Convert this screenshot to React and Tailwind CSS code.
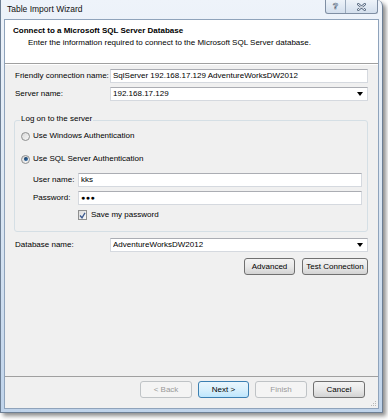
import React from "react";

const font = "font-['Liberation_Sans',Arial,sans-serif]";

function TextBox({ value, combo, children }) {
  return (
    <div className="flex-1 h-[14px] flex items-center bg-white border border-[#d5d9df] border-t-[#abadb3] pl-[2px] pr-[4px]">
      <span className="flex-1 leading-none whitespace-nowrap overflow-hidden">{children ?? value}</span>
      {combo && (
        <svg width="6" height="4" viewBox="0 0 6 4">
          <path d="M0 0h6L3 4z" fill="#000" />
        </svg>
      )}
    </div>
  );
}

function Radio({ checked, label }) {
  return (
    <div className="flex items-center h-[12px] gap-[3px]">
      <span className="w-[9px] h-[9px] rounded-full border border-[#8e8f8f] bg-linear-to-br from-[#d9d9d9] to-[#f7f7f7] flex items-center justify-center">
        {checked && <span className="w-[4px] h-[4px] rounded-full bg-linear-to-br from-[#0f2f52] to-[#3d7dbb]" />}
      </span>
      <span className="leading-none">{label}</span>
    </div>
  );
}

function Button({ children, w, kind = "normal" }) {
  const styles = {
    normal: "border-[#707070] bg-linear-to-b from-[#f4f4f4] via-[#e9e9e9] to-[#d3d3d3] text-black",
    primary: "border-[#3c7fb1] bg-linear-to-b from-[#eaf6fd] via-[#d9f0fc] to-[#bee6fd] text-black",
    disabled: "border-[#bfc3c6] bg-[#f4f4f4] text-[#9a9a9a]",
  };
  return (
    <div className={`${w} h-[17px] rounded-[3px] border flex items-center justify-center leading-none ${styles[kind]}`}>
      {children}
    </div>
  );
}

export default function App() {
  return (
    <div className={`w-[388px] h-[420px] bg-white ${font} text-[8px] text-black`}>
      <div className="w-[383px] h-[413px] flex flex-col border border-t-0 border-[#6d7f95] rounded-tr-[6px] bg-linear-to-b from-[#eef3fa] via-[#dae6f3] to-[#bfd3ea] shadow-[3px_3px_4px_rgba(0,0,0,0.45)]">
        {/* title bar */}
        <div className="h-[19px] flex justify-between items-start pl-[6px] pr-[4px]">
          <span className="text-[8.5px] text-[#111] mt-[5px] leading-none">Table Import Wizard</span>
          <div className="flex h-[14px] border border-t-0 border-[#7f8ea3] rounded-b-[3px] bg-linear-to-b from-[#eef3f9] to-[#d3dfed] overflow-hidden">
            <div className="w-[20px] flex items-center justify-center border-r border-[#9aa9bb]">
              <span className="text-[9px] font-bold text-[#f4f7fb] [-webkit-text-stroke:0.6px_#5e6f85] leading-none">?</span>
            </div>
            <div className="w-[31px] flex items-center justify-center">
              <svg width="9" height="8" viewBox="0 0 9 8">
                <path d="M1 1l7 6M8 1L1 7" stroke="#5e6f85" strokeWidth="2.4" strokeLinecap="round" />
                <path d="M1 1l7 6M8 1L1 7" stroke="#f4f7fb" strokeWidth="1" strokeLinecap="round" />
              </svg>
            </div>
          </div>
        </div>

        {/* client area */}
        <div className="relative flex-1 mx-[3px] mb-[3px] border border-[#8fa3bb] bg-[#f0f0f0] flex flex-col">
          <div className="h-[44px] bg-white border-b border-[#a0a0a0] pl-[8px] pt-[7px]">
            <div className="font-bold leading-none">Connect to a Microsoft SQL Server Database</div>
            <div className="leading-none mt-[4px] pl-[15px]">
              Enter the information required to connect to the Microsoft SQL Server database.
            </div>
          </div>

          <div className="flex-1 flex flex-col border-t border-white pl-[10px] pr-[10px] pt-[4px]">
            <div className="flex items-center">
              <span className="w-[95px] leading-none">Friendly connection name:</span>
              <TextBox value="SqlServer 192.168.17.129 AdventureWorksDW2012" />
            </div>
            <div className="flex items-center mt-[4px]">
              <span className="w-[95px] leading-none">Server name:</span>
              <TextBox value="192.168.17.129" combo />
            </div>

            {/* group box */}
            <div className="relative -ml-[1px] mt-[19px] h-[112px] border border-[#d5dfe5] rounded-[3px] pl-[6px] pr-[5px] pt-[9px]">
              <span className="absolute -top-[6px] left-[5px] px-[1px] bg-[#f0f0f0] leading-none">Log on to the server</span>
              <Radio label="Use Windows Authentication" />
              <div className="mt-[11px]">
                <Radio checked label="Use SQL Server Authentication" />
              </div>
              <div className="flex items-center mt-[8px] pl-[12px]">
                <span className="w-[45px] leading-none">User name:</span>
                <TextBox value="kks" />
              </div>
              <div className="flex items-center mt-[4px] pl-[12px]">
                <span className="w-[45px] leading-none">Password:</span>
                <TextBox>
                  <span className="text-[7px] tracking-[0.5px]">●●●</span>
                </TextBox>
              </div>
              <div className="flex items-center mt-[5px] pl-[57px] gap-[4px]">
                <span className="w-[9px] h-[10px] border border-[#8e8f8f] bg-linear-to-br from-[#dcdcdc] to-[#fafafa] flex items-center justify-center">
                  <svg width="7" height="7" viewBox="0 0 7 7">
                    <path d="M1 3.5l2 2.3L6 0.8" stroke="#3c5a8f" strokeWidth="1.3" fill="none" />
                  </svg>
                </span>
                <span className="leading-none">Save my password</span>
              </div>
            </div>

            <div className="flex items-center mt-[6px]">
              <span className="w-[95px] leading-none">Database name:</span>
              <TextBox value="AdventureWorksDW2012" combo />
            </div>
            <div className="flex justify-end gap-[7px] mt-[6px]">
              <Button w="w-[51px]">Advanced</Button>
              <Button w="w-[66px]">Test Connection</Button>
            </div>
          </div>

          {/* footer */}
          <div className="h-[32px] border-t border-[#a0a0a0] flex justify-end items-start gap-[6px] pt-[4px] pr-[13px]">
            <Button w="w-[52px]" kind="disabled">&lt; Back</Button>
            <Button w="w-[51px]" kind="primary">Next &gt;</Button>
            <Button w="w-[52px]" kind="disabled">Finish</Button>
            <Button w="w-[52px]">Cancel</Button>
          </div>

          {/* size grip */}
          <svg className="absolute right-[1px] bottom-[1px]" width="7" height="7" viewBox="0 0 7 7">
            <g fill="#b8b8b8">
              <rect x="5" y="1" width="1" height="1" />
              <rect x="3" y="3" width="1" height="1" />
              <rect x="5" y="3" width="1" height="1" />
              <rect x="1" y="5" width="1" height="1" />
              <rect x="3" y="5" width="1" height="1" />
              <rect x="5" y="5" width="1" height="1" />
            </g>
          </svg>
        </div>
      </div>
    </div>
  );
}
